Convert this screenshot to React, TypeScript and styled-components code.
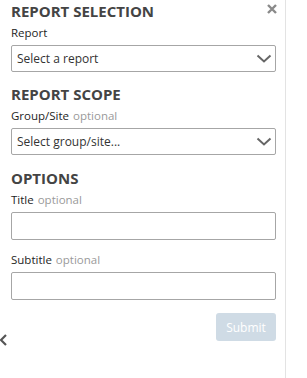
import React from "react";
import styled, { createGlobalStyle } from "styled-components";

const Global = createGlobalStyle`
  html, body { margin: 0; padding: 0; background: #fff; }
  body { font-family: "Open Sans", "Liberation Sans", sans-serif; }
  * { box-sizing: border-box; }
`;

const Panel = styled.div`
  position: relative;
  width: 286px;
  height: 378px;
  border-right: 1px solid #e3e3e3;
  padding: 1px 9px 0 11px;
  display: flex;
  flex-direction: column;
`;

const Section = styled.section<{ $gapBefore: number }>`
  display: flex;
  flex-direction: column;
  gap: 12px;
  margin-top: ${(p) => p.$gapBefore}px;
`;

const Heading = styled.h2`
  margin: 0 0 -8px;
  font-size: 15px;
  line-height: 20px;
  font-weight: 700;
  color: #444;
`;

const Field = styled.div`
  display: flex;
  flex-direction: column;
  gap: 4px;
`;

const Label = styled.label`
  font-size: 11.5px;
  line-height: 16px;
  color: #1e1e1e;
`;

const Optional = styled.span`
  color: #9a9a9a;
  margin-left: 1px;
`;

const SelectBox = styled.div`
  height: 27px;
  border: 1px solid #a6a6a6;
  border-radius: 2px;
  display: flex;
  align-items: center;
  justify-content: space-between;
  padding: 0 3px 0 5px;
  font-size: 12px;
  color: #333;
`;

const TextInput = styled.input`
  height: 28px;
  border: 1px solid #a6a6a6;
  border-radius: 2px;
  padding: 0 5px;
  font: inherit;
  font-size: 12px;
  outline: none;
`;

const Actions = styled.div`
  display: flex;
  justify-content: flex-end;
  margin-top: 13px;
`;

const SubmitButton = styled.button`
  width: 60px;
  height: 28px;
  border: none;
  border-radius: 3px;
  background: #cfdbe5;
  color: #fff;
  font-family: "Open Sans", "Liberation Sans", sans-serif;
  font-size: 12px;
  padding: 0;
`;

const CloseButton = styled.div`
  position: absolute;
  top: -2px;
  left: 266px;
  width: 12px;
  height: 11px;
`;

const CollapseToggle = styled.div`
  position: absolute;
  left: 0;
  top: 330px;
  width: 8px;
  height: 13px;
`;

const Chevron = () => (
  <svg width="16" height="10" viewBox="0 0 16 10">
    <polyline points="1.5,1.5 8,7.5 14.5,1.5" fill="none" stroke="#666" strokeWidth="2" />
  </svg>
);

export default function App() {
  return (
    <>
      <Global />
      <Panel>
        <CloseButton>
          <svg width="12" height="11" viewBox="0 0 12 11">
            <path d="M2 1 L10 9 M10 1 L2 9" stroke="#8a8a8a" strokeWidth="2.4" />
          </svg>
        </CloseButton>
        <Section $gapBefore={0}>
          <Heading>REPORT SELECTION</Heading>
          <Field>
            <Label>Report</Label>
            <SelectBox>
              <span>Select a report</span>
              <Chevron />
            </SelectBox>
          </Field>
        </Section>
        <Section $gapBefore={12}>
          <Heading>REPORT SCOPE</Heading>
          <Field>
            <Label>
              Group/Site <Optional>optional</Optional>
            </Label>
            <SelectBox>
              <span>Select group/site...</span>
              <Chevron />
            </SelectBox>
          </Field>
        </Section>
        <Section $gapBefore={13}>
          <Heading>OPTIONS</Heading>
          <Field>
            <Label>
              Title <Optional>optional</Optional>
            </Label>
            <TextInput />
          </Field>
          <Field>
            <Label>
              Subtitle <Optional>optional</Optional>
            </Label>
            <TextInput />
          </Field>
        </Section>
        <Actions>
          <SubmitButton>Submit</SubmitButton>
        </Actions>
        <CollapseToggle>
          <svg width="8" height="13" viewBox="0 0 8 13">
            <polyline points="6,1 1,6 6,11" fill="none" stroke="#555" strokeWidth="2.2" />
          </svg>
        </CollapseToggle>
      </Panel>
    </>
  );
}
